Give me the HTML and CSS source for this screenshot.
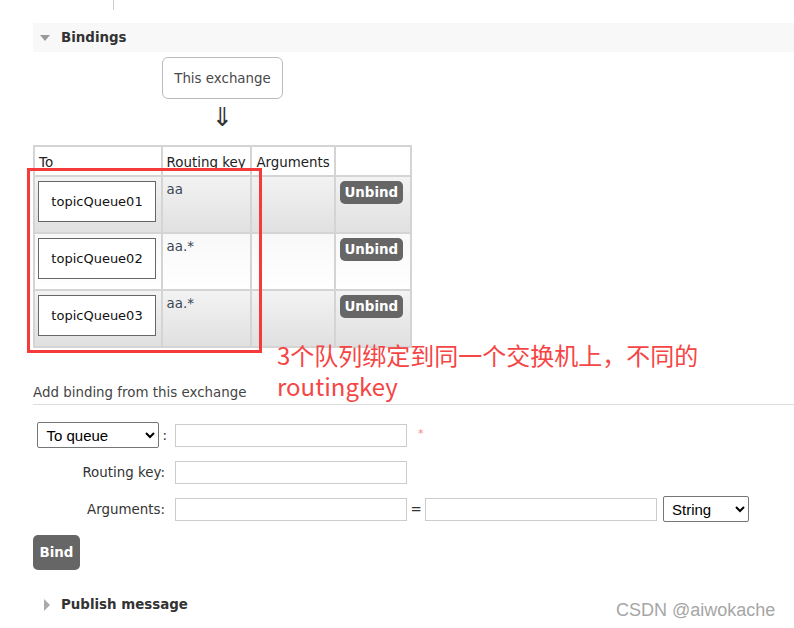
FILE: index.html
```html
<!DOCTYPE html>
<html>
<head>
<meta charset="utf-8">
<link rel="stylesheet" href="styles.css">
</head>
<body>
<div class="vline"></div>
<div class="main">
  <div class="sec-head"><span class="tri-down"></span><span class="sec-title">Bindings</span></div>
  <div class="exchange">This exchange</div>
  <div class="arrow">⇓</div>
  <table class="bindings">
    <thead>
      <tr><th class="c-to">To</th><th class="c-rk">Routing key</th><th class="c-args">Arguments</th><th class="c-act"></th></tr>
    </thead>
    <tbody>
      <tr class="alt1">
        <td><div class="queue">topicQueue01</div></td>
        <td class="rk">aa</td><td></td>
        <td><button class="btn unbind">Unbind</button></td>
      </tr>
      <tr class="alt0">
        <td><div class="queue">topicQueue02</div></td>
        <td class="rk">aa.*</td><td></td>
        <td><button class="btn unbind">Unbind</button></td>
      </tr>
      <tr class="alt1">
        <td><div class="queue">topicQueue03</div></td>
        <td class="rk">aa.*</td><td></td>
        <td><button class="btn unbind">Unbind</button></td>
      </tr>
    </tbody>
  </table>
  <div class="add-title">Add binding from this exchange</div>
  <div class="form">
    <div class="row">
      <div class="lbl"><select class="sel sel-dest"><option>To queue</option></select><span class="colon">:</span></div>
      <input class="inp" type="text"><span class="req">*</span>
    </div>
    <div class="row">
      <div class="lbl">Routing key:</div>
      <input class="inp" type="text">
    </div>
    <div class="row">
      <div class="lbl">Arguments:</div>
      <input class="inp" type="text"><span class="eq">=</span><input class="inp" type="text">
      <select class="sel sel-type"><option>String</option></select>
    </div>
  </div>
  <button class="btn bind">Bind</button>
  <div class="sec-head plain"><span class="tri-right"></span><span class="sec-title">Publish message</span></div>
</div>
<div class="annot-box"></div>
<div class="annot-text"><div>3个队列绑定到同一个交换机上，不同的</div><div>routingkey</div></div>
<div class="watermark">CSDN @aiwokache</div>
</body>
</html>
```
FILE: styles.css
```css
* { box-sizing: border-box; }
html, body { margin: 0; padding: 0; background: #fff; }
body {
  position: relative;
  width: 794px;
  height: 628px;
  overflow: hidden;
  font-family: "DejaVu Sans", Verdana, sans-serif;
  font-size: 13.4px;
  color: #444;
}
.vline { margin-left: 113px; width: 1px; height: 10px; background: #ccc; }
.main { margin-left: 33px; margin-top: 13px; }
.sec-head {
  height: 29px;
  background: #f8f8f8;
  display: flex;
  align-items: center;
  padding-left: 7px;
}
.sec-head.plain { background: transparent; margin-top: 20px; padding-left: 11px; }
.tri-down {
  width: 0; height: 0;
  border-left: 5px solid transparent;
  border-right: 5px solid transparent;
  border-top: 6px solid #999;
  margin-top: 1px;
}
.tri-right {
  width: 0; height: 0;
  border-top: 6px solid transparent;
  border-bottom: 6px solid transparent;
  border-left: 6px solid #aaa;
}
.sec-title { font-weight: bold; color: #333; margin-left: 11px; }
.exchange {
  margin: 5px 0 0 129px;
  width: 121px;
  height: 42px;
  border: 1px solid #bbb;
  border-radius: 6px;
  display: flex;
  align-items: center;
  justify-content: center;
  color: #484848;
}
.arrow {
  margin-left: 129px;
  width: 121px;
  height: 46px;
  text-align: center;
  font-size: 26px;
  line-height: 36px;
  color: #333;
}
.bindings {
  border-collapse: collapse;
  border: 2px solid #d4d4d4;
  width: 379px;
}
.bindings th, .bindings td { border: 2px solid #d4d4d4; padding: 0; }
.bindings th {
  height: 30px;
  font-weight: normal;
  text-align: left;
  vertical-align: bottom;
  padding: 0 4px 5px 4px;
  color: #222;
  white-space: nowrap;
  background: #fff;
}
.c-to { width: 128px; }
.c-rk { width: 90px; }
.c-args { width: 83px; }
.c-act { width: 78px; }
.bindings td { height: 57px; vertical-align: top; }
.alt1 { background: linear-gradient(#f3f3f3, #e0e0e0); }
.alt0 { background: linear-gradient(#f8f8f8, #ffffff); }
.queue {
  margin: 4px 3px 0 3px;
  width: 118px;
  height: 41px;
  border: 1px solid #666;
  background: #fff;
  display: flex;
  align-items: center;
  justify-content: center;
  color: #111;
  font-size: 13px;
}
.rk { padding: 5px 4px 0 4px !important; color: #3a4656; }
.btn {
  font-family: "DejaVu Sans", Verdana, sans-serif;
  font-weight: bold;
  font-size: 13.4px;
  color: #fff;
  background: #666;
  border: none;
  border-radius: 5px;
  padding: 0;
}
.unbind { margin: 4px 0 0 4px; width: 63px; height: 23px; }
.add-title {
  margin-top: 37px;
  padding-bottom: 3px;
  border-bottom: 1px solid #ddd;
  line-height: 16px;
  color: #444;
}
.form { margin-top: 17px; display: flex; flex-direction: column; gap: 11px; }
.row { display: flex; align-items: center; height: 26px; }
.lbl {
  width: 142px;
  padding-right: 10px;
  display: flex;
  align-items: center;
  justify-content: flex-end;
  color: #333;
}
.colon { margin-left: 3px; margin-right: -2px; }
.sel {
  font-family: "Liberation Sans", Arial, sans-serif;
  font-size: 15px;
  height: 26px;
  border: 1px solid #767676;
  border-radius: 2px;
  background: #fff;
  color: #000;
  padding: 0 4px;
}
.sel-dest { width: 122px; }
.sel-type { width: 86px; margin-left: 6px; }
.inp {
  width: 232px;
  height: 23px;
  border: 1px solid #ccc;
  margin: 0;
  padding: 0;
}
.req { color: #f08888; font-size: 11px; margin-left: 11px; margin-top: -4px; }
.eq { width: 18px; text-align: center; color: #333; }
.bind { margin-top: 13px; width: 47px; height: 35px; }
.annot-box {
  position: absolute;
  left: 27px; top: 168px;
  width: 235px; height: 185px;
  border: 3px solid #f63a3a;
}
.annot-text {
  position: absolute;
  left: 277px; top: 339px;
  font-family: "Noto Sans CJK SC", "Noto Sans", sans-serif;
  font-size: 24px;
  line-height: 31px;
  color: #f54545;
}
.watermark {
  position: absolute;
  left: 616px; top: 600px;
  font-family: "Liberation Sans", Arial, sans-serif;
  font-size: 18px;
  color: #a6a6a6;
  text-shadow: 0 0 1px #fff;
}
```
